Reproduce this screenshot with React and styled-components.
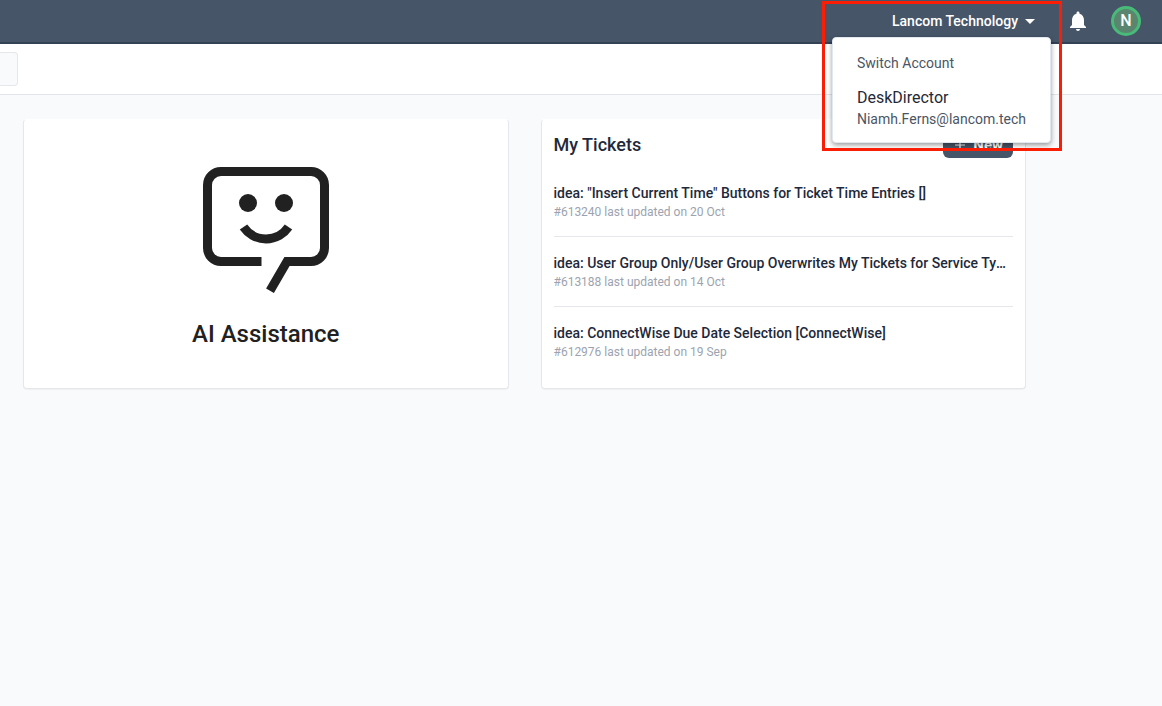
import styled, { createGlobalStyle } from 'styled-components';
import { MdNotifications } from 'react-icons/md';

const tickets = [
    { id: 613240, title: 'idea: "Insert Current Time" Buttons for Ticket Time Entries []', updated: '20 Oct' },
    { id: 613188, title: 'idea: User Group Only/User Group Overwrites My Tickets for Service Types', updated: '14 Oct' },
    { id: 612976, title: 'idea: ConnectWise Due Date Selection [ConnectWise]', updated: '19 Sep' },
];

function AccountMenu() {
    return (
        <Account>
            <AccountButton type="button" aria-expanded="true">
                Lancom Technology
                <svg width="10" height="5" viewBox="0 0 10 5" aria-hidden="true">
                    <path d="M0 0h10L5 5z" fill="currentColor" />
                </svg>
            </AccountButton>
            <Dropdown>
                <DropdownLabel>Switch Account</DropdownLabel>
                <AccountOption type="button">
                    <AccountName>DeskDirector</AccountName>
                    <AccountEmail>Niamh.Ferns@lancom.tech</AccountEmail>
                </AccountOption>
            </Dropdown>
            <Highlight />
        </Account>
    );
}

function AssistanceIcon() {
    return (
        <svg width="126" height="126" viewBox="0 0 126 126" fill="none" aria-hidden="true">
            <path
                d="M58.5 94.5H18A13.5 13.5 0 0 1 4.5 81V18A13.5 13.5 0 0 1 18 4.5h90A13.5 13.5 0 0 1 121.5 18v63a13.5 13.5 0 0 1-13.5 13.5H84L67 123.7"
                stroke="currentColor"
                strokeWidth="9"
            />
            <circle cx="45" cy="36" r="9" fill="currentColor" />
            <circle cx="81" cy="36" r="9" fill="currentColor" />
            <path d="M40.5 60a27.2 27.2 0 0 0 45 0" stroke="currentColor" strokeWidth="9" />
        </svg>
    );
}

function App() {
    return (
        <>
            <GlobalStyle />
            <TopBar>
                <AccountMenu />
                <IconButton type="button" aria-label="Notifications">
                    <MdNotifications size={24} />
                </IconButton>
                <Avatar type="button" aria-label="Profile">N</Avatar>
            </TopBar>
            <SubBar>
                <Search type="text" aria-label="Search" />
            </SubBar>
            <Main>
                <AssistanceCard>
                    <AssistanceIcon />
                    <AssistanceTitle>AI Assistance</AssistanceTitle>
                </AssistanceCard>
                <TicketsCard>
                    <CardHeader>
                        <CardTitle>My Tickets</CardTitle>
                        <NewButton type="button">
                            <svg width="10" height="10" viewBox="0 0 10 10" aria-hidden="true">
                                <path d="M5 0v10M0 5h10" stroke="currentColor" strokeWidth="1.2" />
                            </svg>
                            New
                        </NewButton>
                    </CardHeader>
                    <TicketList>
                        {tickets.map((ticket) => (
                            <Ticket key={ticket.id}>
                                <TicketTitle href="#">{ticket.title}</TicketTitle>
                                <TicketMeta>#{ticket.id} last updated on {ticket.updated}</TicketMeta>
                            </Ticket>
                        ))}
                    </TicketList>
                </TicketsCard>
            </Main>
        </>
    );
}

export default App;

const GlobalStyle = createGlobalStyle`
* {
    box-sizing: border-box;
}
body {
    margin: 0;
    background: #f8fafc;
    color: #1e293b;
    font-family: Roboto, "Liberation Sans", sans-serif;
    font-size: 14px;
    line-height: 20px;
}
button, input {
    font: inherit;
}
h1, h2, p, ul {
    margin: 0;
    padding: 0;
}
`

const TopBar = styled.header`
display: flex;
align-items: center;
justify-content: flex-end;
height: 44px;
padding-right: 21px;
background: #475569;
border-bottom: 2px solid #334155;
color: #fff;
`

const Account = styled.div`
position: relative;
margin-right: 31px;
`

const AccountButton = styled.button`
display: flex;
align-items: center;
gap: 7px;
padding: 0;
border: 0;
background: none;
color: #fff;
font-weight: 500;
cursor: pointer;
`

const Dropdown = styled.div`
position: absolute;
z-index: 1;
top: 26px;
right: -16px;
padding: 15px 24px 14px;
border: 1px solid #e2e8f0;
border-radius: 4px;
background: #fff;
box-shadow: 0 2px 5px rgba(0, 0, 0, 0.4);
`

const DropdownLabel = styled.p`
margin-bottom: 13px;
color: #4b5563;
`

const AccountOption = styled.button`
display: block;
padding: 0;
border: 0;
background: none;
text-align: left;
cursor: pointer;
`

const AccountName = styled.span`
display: block;
color: #1f2937;
font-size: 16px;
line-height: 24px;
`

const AccountEmail = styled.span`
display: block;
color: #4b5563;
line-height: 18px;
`

const Highlight = styled.div`
position: absolute;
z-index: 2;
top: -10px;
right: -27px;
width: 240px;
height: 150px;
border: 3px solid #fb1e05;
pointer-events: none;
`

const IconButton = styled.button`
display: flex;
margin-right: 21px;
padding: 0;
border: 0;
background: none;
color: #fff;
cursor: pointer;
`

const Avatar = styled.button`
width: 30px;
height: 30px;
padding: 0;
border: 3px solid #48bb78;
border-radius: 50%;
background: #5a866f;
color: #fff;
font-size: 16px;
font-weight: 500;
line-height: 24px;
cursor: pointer;
`

const SubBar = styled.div`
display: flex;
align-items: center;
height: 51px;
background: #fff;
border-bottom: 1px solid #e2e4e9;
`

const Search = styled.input`
width: 18px;
height: 34px;
padding: 0;
border: 1px solid #e5e7eb;
border-left: 0;
border-radius: 0 4px 4px 0;
background: #f8fafc;
`

const Main = styled.main`
display: grid;
grid-template-columns: 1fr 1fr;
gap: 32px;
padding: 24px 136px 24px 23px;
`

const Card = styled.section`
min-width: 0;
border: 1px solid #e5e7eb;
border-top-color: #fff;
border-radius: 4px;
background: #fff;
box-shadow: 0 1px 1px rgba(0, 0, 0, 0.04);
`

const AssistanceCard = styled(Card)`
display: flex;
flex-direction: column;
align-items: center;
padding-top: 47px;
color: #212121;
`

const AssistanceTitle = styled.h1`
margin-top: 25px;
font-size: 24px;
font-weight: 500;
line-height: 32px;
`

const TicketsCard = styled(Card)`
padding: 11px 12px 12px;
`

const CardHeader = styled.div`
display: flex;
align-items: center;
justify-content: space-between;
`

const CardTitle = styled.h2`
font-size: 18px;
font-weight: 500;
line-height: 28px;
`

const NewButton = styled.button`
display: flex;
align-items: center;
gap: 8px;
height: 26px;
padding: 0 10px 0 12px;
border: 0;
border-radius: 6px;
background: #475569;
color: #fff;
font-size: 15px;
font-weight: 700;
cursor: pointer;
`

const TicketList = styled.ul`
margin-top: 8px;
list-style: none;
`

const Ticket = styled.li`
padding: 16px 0 15px;

& + & {
    border-top: 1px solid #e5e7eb;
}
`

const TicketTitle = styled.a`
display: block;
overflow: hidden;
color: #1e293b;
font-weight: 500;
text-decoration: none;
text-overflow: ellipsis;
white-space: nowrap;
`

const TicketMeta = styled.p`
color: #9ca3af;
font-size: 12px;
line-height: 18px;
`
